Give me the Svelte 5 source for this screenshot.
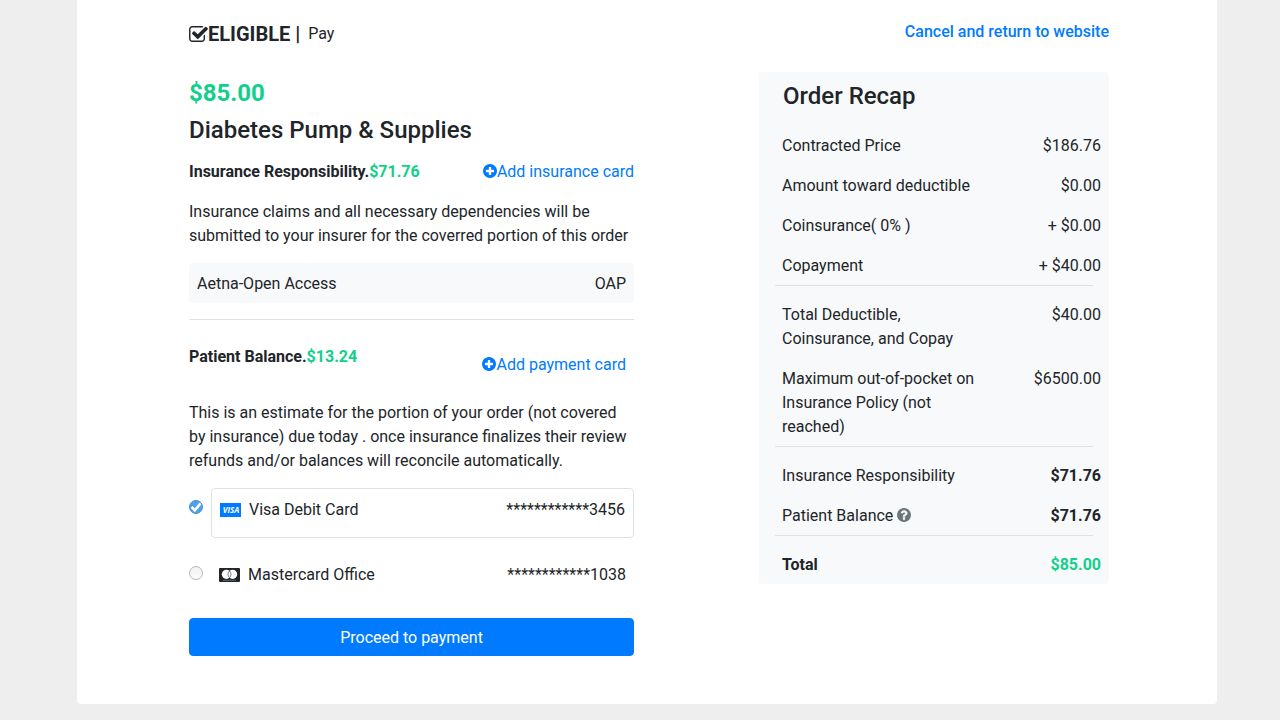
<script lang="ts">
	type Row = { label: string; value: string; strong?: boolean; total?: boolean; help?: boolean };

	const groups: Row[][] = [
		[
			{ label: 'Contracted Price', value: '$186.76' },
			{ label: 'Amount toward deductible', value: '$0.00' },
			{ label: 'Coinsurance( 0% )', value: '+ $0.00' },
			{ label: 'Copayment', value: '+ $40.00' }
		],
		[
			{ label: 'Total Deductible, Coinsurance, and Copay', value: '$40.00' },
			{ label: 'Maximum out-of-pocket on Insurance Policy (not reached)', value: '$6500.00' }
		],
		[
			{ label: 'Insurance Responsibility', value: '$71.76', strong: true },
			{ label: 'Patient Balance', value: '$71.76', strong: true, help: true }
		],
		[{ label: 'Total', value: '$85.00', total: true }]
	];

	const cards = [
		{ id: 'visa', name: 'Visa Debit Card', number: '************3456' },
		{ id: 'mastercard', name: 'Mastercard Office', number: '************1038' }
	];

	let selected = $state('visa');
</script>

{#snippet plus()}
	<svg class="icon" viewBox="128 128 1536 1536" aria-hidden="true">
		<path d="M1344 960v-128q0-26-19-45t-45-19h-256v-256q0-26-19-45t-45-19h-128q-26 0-45 19t-19 45v256h-256q-26 0-45 19t-19 45v128q0 26 19 45t45 19h256v256q0 26 19 45t45 19h128q26 0 45-19t19-45v-256h256q26 0 45-19t19-45zm320-64q0 209-103 385.5t-279.5 279.5-385.5 103-385.5-103-279.5-279.5-103-385.5 103-385.5 279.5-279.5 385.5-103 385.5 103 279.5 279.5 103 385.5z" />
	</svg>
{/snippet}

<div class="page">
	<main class="sheet">
		<header>
			<div class="brand">
				<svg class="logo" viewBox="64 128 1664 1408" aria-hidden="true">
					<path d="M1472 930v318q0 119-84.5 203.5t-203.5 84.5h-832q-119 0-203.5-84.5t-84.5-203.5v-832q0-119 84.5-203.5t203.5-84.5h832q63 0 117 25 15 7 18 23 3 17-9 29l-49 49q-10 10-23 10-3 0-9-2-23-6-45-6h-832q-66 0-113 47t-47 113v832q0 66 47 113t113 47h832q66 0 113-47t47-113v-254q0-13 9-22l64-64q10-10 23-10 6 0 12 3 20 8 20 29zm231-489l-814 814q-24 24-57 24t-57-24l-430-430q-24-24-24-57t24-57l110-110q24-24 57-24t57 24l263 263 647-647q24-24 57-24t57 24l110 110q24 24 24 57t-24 57z" />
				</svg>
				<strong>ELIGIBLE |</strong>
				<span class="product">Pay</span>
			</div>
			<a class="cancel" href="#cancel">Cancel and return to website</a>
		</header>

		<div class="columns">
			<section class="order">
				<h4 class="amount">$85.00</h4>
				<h4>Diabetes Pump &amp; Supplies</h4>

				<div class="line">
					<b>Insurance Responsibility.<span class="green">$71.76</span></b>
					<a href="#insurance">{@render plus()}Add insurance card</a>
				</div>
				<p>Insurance claims and all necessary dependencies will be submitted to your insurer for the coverred portion of this order</p>
				<div class="plan">
					<span>Aetna-Open Access</span>
					<span>OAP</span>
				</div>

				<hr />

				<div class="line balance">
					<b>Patient Balance.<span class="green">$13.24</span></b>
					<a href="#payment">{@render plus()}Add payment card</a>
				</div>
				<p>This is an estimate for the portion of your order (not covered by insurance) due today . once insurance finalizes their review refunds and/or balances will reconcile automatically.</p>

				<form onsubmit={(e) => e.preventDefault()}>
					{#each cards as card}
						<div class="card-option" class:selected={selected === card.id}>
							<input type="radio" id={card.id} name="card" value={card.id} bind:group={selected} />
							<label for={card.id}>
								{#if card.id === 'visa'}
									<svg class="card-icon" viewBox="0 0 21 14" aria-hidden="true">
										<rect width="21" height="14" fill="#007bff" />
										<text x="11" y="10" text-anchor="middle" font-family="Open Sans, sans-serif" font-size="8" font-weight="700" font-style="italic" fill="#fff">VISA</text>
									</svg>
								{:else}
									<svg class="card-icon" viewBox="0 0 21 14" aria-hidden="true">
										<rect width="21" height="14" rx="1" fill="#212529" />
										<circle cx="7.4" cy="6.3" r="4.6" fill="#fff" />
										<circle cx="13.6" cy="6.3" r="4.6" fill="#fff" />
										<path d="M10.5 2.9a4.6 4.6 0 0 0 0 6.8a4.6 4.6 0 0 0 0-6.8z" fill="#fff" stroke="#212529" stroke-width=".6" />
										<path d="M4 12.3h13" stroke="#8b8e91" stroke-width=".6" />
									</svg>
								{/if}
								<span>{card.name}</span>
								<span class="number">{card.number}</span>
							</label>
						</div>
					{/each}
					<button type="submit">Proceed to payment</button>
				</form>
			</section>

			<aside class="recap">
				<h4>Order Recap</h4>
				{#each groups as rows}
					<dl>
						{#each rows as row}
							<div class="row" class:total={row.total}>
								<dt>
									{row.label}
									{#if row.help}
										<svg class="icon help" viewBox="128 128 1536 1536" aria-hidden="true">
											<path d="M1024 1376v-192q0-14-9-23t-23-9h-192q-14 0-23 9t-9 23v192q0 14 9 23t23 9h192q14 0 23-9t9-23zm256-672q0-88-55.5-163t-138.5-116-170-41q-243 0-371 213-15 24 8 42l132 100q7 6 19 6 16 0 25-12 53-68 86-92 34-24 86-24 48 0 85.5 26t37.5 59q0 38-20 61t-68 45q-63 28-115.5 86.5t-52.5 125.5v36q0 14 9 23t23 9h192q14 0 23-9t9-23q0-19 21.5-49.5t54.5-49.5q32-18 49-28.5t46-35 44.5-48 28-60.5 12.5-81zm384 192q0 209-103 385.5t-279.5 279.5-385.5 103-385.5-103-279.5-279.5-103-385.5 103-385.5 279.5-279.5 385.5-103 385.5 103 279.5 279.5 103 385.5z" />
										</svg>
									{/if}
								</dt>
								<dd class:strong={row.strong}>{row.value}</dd>
							</div>
						{/each}
					</dl>
				{/each}
			</aside>
		</div>
	</main>
</div>

<style>
	:global(body) {
		background: #eee;
	}

	.page,
	.page :global(*) {
		box-sizing: border-box;
	}

	.page {
		padding: 0 0 16px 14px;
		font: 16px/24px Roboto, sans-serif;
		color: #212529;
	}

	.sheet {
		max-width: 1140px;
		margin: 0 auto;
		padding: 20px 108px 48px 112px;
		background: #fff;
		border-radius: 0 0 4px 4px;
	}

	header {
		display: flex;
		justify-content: space-between;
		align-items: flex-start;
		margin-bottom: 24px;
	}

	.brand {
		display: flex;
		align-items: center;
		height: 28px;
	}

	.brand strong {
		font-size: 20px;
		font-weight: 700;
	}

	.logo {
		width: 19px;
		height: 16px;
		fill: currentColor;
	}

	.product {
		margin-left: 8px;
	}

	a {
		color: #007bff;
		text-decoration: none;
	}

	.cancel {
		font-weight: 500;
	}

	.columns {
		display: grid;
		grid-template-columns: 445fr 350fr;
		gap: 125px;
		align-items: start;
	}

	h4 {
		margin: 0 0 8px;
		font-size: 24px;
		line-height: 29px;
		font-weight: 500;
	}

	.order {
		padding-top: 7px;
	}

	.amount {
		font-weight: 700;
		color: #12cf8b;
	}

	.green {
		color: #12cf8b;
	}

	b {
		font-weight: 700;
	}

	.line {
		display: flex;
		justify-content: space-between;
		margin: 15px 0 16px;
	}

	.icon {
		width: 14px;
		height: 14px;
		fill: currentColor;
		vertical-align: -1px;
	}

	p {
		margin: 0 0 15px;
	}

	.plan {
		display: flex;
		justify-content: space-between;
		padding: 9px 8px 7px;
		background: #f8f9fa;
		border-radius: 4px;
	}

	hr {
		margin: 16px 0 25px;
		border: 0;
		border-top: 1px solid #dee2e6;
	}

	.balance a {
		padding: 8px 8px 8px 0;
	}

	.card-option {
		display: flex;
		align-items: flex-start;
		gap: 8px;
		margin-bottom: 16px;
	}

	input {
		appearance: none;
		flex: none;
		width: 14px;
		height: 14px;
		margin: 12px 0 0;
		border: 1px solid #b4b7b9;
		border-radius: 50%;
		background: linear-gradient(#f0f2f3, #fdfdfd);
	}

	input:checked {
		border-color: #4a90cc;
		background: #4ba3ec url("data:image/svg+xml,%3Csvg xmlns='http://www.w3.org/2000/svg' viewBox='0 0 12 12'%3E%3Cpath d='M1.6 6l3.2 3.4L10.6 2.4' fill='none' stroke='%23fff' stroke-width='2.6'/%3E%3C/svg%3E") center / 12px no-repeat;
	}

	label {
		display: flex;
		flex: 1;
		align-items: center;
		padding: 9px 8px 7px;
	}

	.selected label {
		padding-bottom: 15px;
		border: 1px solid #dee2e6;
		border-radius: 4px;
	}

	.card-icon {
		width: 21px;
		height: 14px;
		margin-right: 8px;
	}

	.number {
		margin-left: auto;
	}

	button {
		display: block;
		width: 100%;
		margin-top: 24px;
		padding: 7px 12px 5px;
		border: 1px solid #007bff;
		border-radius: 4px;
		background: #007bff;
		color: #fff;
		font: inherit;
		cursor: pointer;
	}

	.recap {
		padding-top: 10px;
		background: #f8f9fa;
		border-radius: 4px;
	}

	.recap h4 {
		margin: 0 24px 14px;
	}

	dl {
		margin: 0 16px;
	}

	dl + dl {
		border-top: 1px solid #dee2e6;
		padding-top: 8px;
	}

	.row {
		display: flex;
		justify-content: space-between;
		margin-right: -8px;
		padding: 9px 0 7px 7px;
	}

	dt {
		max-width: 200px;
	}

	dd {
		margin: 0;
	}

	.strong,
	.total {
		font-weight: 700;
	}

	.total dd {
		color: #12cf8b;
	}

	.help {
		color: #6c757d;
	}
</style>
